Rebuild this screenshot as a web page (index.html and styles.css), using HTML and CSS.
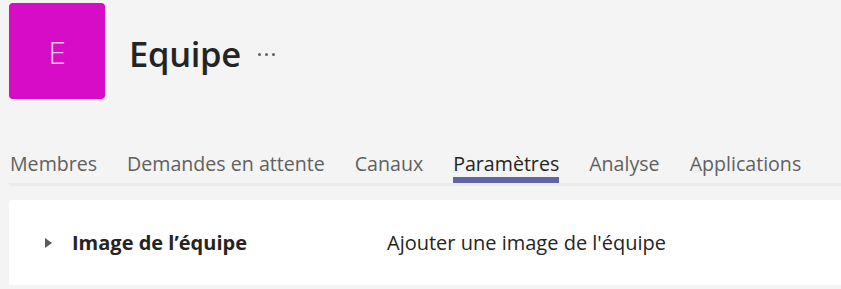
FILE: index.html
```html
<!DOCTYPE html>
<html lang="fr">
<head>
<meta charset="utf-8">
<title>Equipe</title>
<link rel="stylesheet" href="styles.css">
</head>
<body>
<header class="team-header">
  <div class="avatar">E</div>
  <h1 class="team-name">Equipe</h1>
  <button class="more" aria-label="Plus d'options">
    <span class="dot"></span><span class="dot"></span><span class="dot"></span>
  </button>
</header>

<nav class="tabs">
  <a class="tab">Membres</a>
  <a class="tab">Demandes en attente</a>
  <a class="tab">Canaux</a>
  <a class="tab active">Paramètres</a>
  <a class="tab">Analyse</a>
  <a class="tab">Applications</a>
</nav>

<section class="settings">
  <div class="setting-row">
    <svg class="caret" width="7" height="10" viewBox="0 0 7 10" aria-hidden="true">
      <path d="M0 0 L7 5 L0 10 Z" fill="#5a5a5a"/>
    </svg>
    <div class="setting-title">Image de l’équipe</div>
    <div class="setting-value">Ajouter une image de l'équipe</div>
  </div>
</section>
</body>
</html>
```

FILE: styles.css
```css
html, body {
  margin: 0;
  padding: 0;
}

body {
  background: #f4f4f4;
  font-family: "Open Sans", "Noto Sans", sans-serif;
  color: #252424;
  overflow: hidden;
}

/* Team header: avatar, name, overflow menu */
.team-header {
  display: flex;
  align-items: center;
  padding: 3px 0 0 9px;
}

.avatar {
  width: 96px;
  height: 96px;
  border-radius: 4px;
  background: #d60cc6;
  color: #f7c4ef;
  font-size: 32px;
  font-weight: 300;
  display: flex;
  align-items: center;
  justify-content: center;
}

.team-name {
  margin: 0 0 0 24px;
  font-size: 34.5px;
  font-weight: 600;
  letter-spacing: -0.3px;
  color: #252424;
  line-height: 1;
  padding-top: 6px;
}

.more {
  border: 0;
  background: none;
  padding: 6px 0 0 0;
  margin: 0 0 0 17px;
  display: flex;
  gap: 4px;
}

.dot {
  width: 3px;
  height: 3px;
  border-radius: 50%;
  background: #616161;
}

/* Tab strip */
.tabs {
  display: flex;
  gap: 30px;
  margin: 45px 0 0 9px;
  padding-left: 1px;
  border-bottom: 3px solid #ebebeb;
}

.tab {
  display: block;
  font-size: 19.6px;
  line-height: 26px;
  color: #616161;
  padding-top: 7px;
  border-bottom: 6px solid transparent;
  white-space: nowrap;
}

.tab.active {
  color: #252424;
  border-bottom-color: #6264a7;
}

/* Settings card */
.settings {
  margin: 14px 0 0 9px;
  background: #ffffff;
  border-radius: 3px 0 0 0;
}

.setting-row {
  display: flex;
  align-items: center;
  height: 85px;
}

.caret {
  margin-left: 36px;
  flex: none;
}

.setting-title {
  margin-left: 20px;
  width: 315px;
  font-size: 20px;
  font-weight: 700;
  color: #252424;
}

.setting-value {
  font-size: 20px;
  color: #252424;
}
```
